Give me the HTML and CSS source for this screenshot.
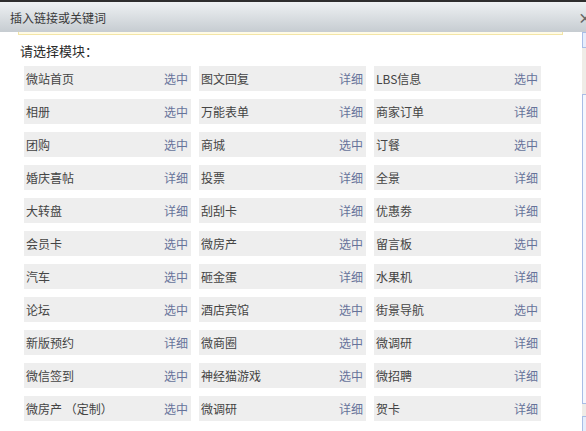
FILE: index.html
```html
<!DOCTYPE html>
<html lang="zh-CN">

<head>
    <meta charset="UTF-8">
    <meta name="viewport" content="width=device-width, initial-scale=1.0">
    <title>插入链接或关键词</title>
    <link rel="stylesheet" href="styles.css">
</head>

<body>
    <div class="dialog">
        <div class="dialog-head">
            <span class="dialog-title">插入链接或关键词</span>
            <span class="dialog-close">×</span>
        </div>
        <div class="dialog-body">
            <div class="content">
                <div class="tips"></div>
                <div class="label">请选择模块：</div>
                <div class="modules">
                    <div class="module"><span>微站首页</span><a>选中</a></div>
                    <div class="module"><span>图文回复</span><a>详细</a></div>
                    <div class="module"><span>LBS信息</span><a>选中</a></div>
                    <div class="module"><span>相册</span><a>选中</a></div>
                    <div class="module"><span>万能表单</span><a>详细</a></div>
                    <div class="module"><span>商家订单</span><a>详细</a></div>
                    <div class="module"><span>团购</span><a>选中</a></div>
                    <div class="module"><span>商城</span><a>选中</a></div>
                    <div class="module"><span>订餐</span><a>选中</a></div>
                    <div class="module"><span>婚庆喜帖</span><a>详细</a></div>
                    <div class="module"><span>投票</span><a>详细</a></div>
                    <div class="module"><span>全景</span><a>详细</a></div>
                    <div class="module"><span>大转盘</span><a>详细</a></div>
                    <div class="module"><span>刮刮卡</span><a>详细</a></div>
                    <div class="module"><span>优惠劵</span><a>详细</a></div>
                    <div class="module"><span>会员卡</span><a>选中</a></div>
                    <div class="module"><span>微房产</span><a>选中</a></div>
                    <div class="module"><span>留言板</span><a>选中</a></div>
                    <div class="module"><span>汽车</span><a>选中</a></div>
                    <div class="module"><span>砸金蛋</span><a>详细</a></div>
                    <div class="module"><span>水果机</span><a>详细</a></div>
                    <div class="module"><span>论坛</span><a>选中</a></div>
                    <div class="module"><span>酒店宾馆</span><a>选中</a></div>
                    <div class="module"><span>街景导航</span><a>选中</a></div>
                    <div class="module"><span>新版预约</span><a>详细</a></div>
                    <div class="module"><span>微商圈</span><a>选中</a></div>
                    <div class="module"><span>微调研</span><a>详细</a></div>
                    <div class="module"><span>微信签到</span><a>选中</a></div>
                    <div class="module"><span>神经猫游戏</span><a>选中</a></div>
                    <div class="module"><span>微招聘</span><a>详细</a></div>
                    <div class="module"><span>微房产 （定制）</span><a>选中</a></div>
                    <div class="module"><span>微调研</span><a>详细</a></div>
                    <div class="module"><span>贺卡</span><a>详细</a></div>
                </div>
            </div>
            <div class="scrollbar">
                <div class="scroll-btn"></div>
                <div class="scroll-thumb"></div>
                <div class="scroll-btn"></div>
            </div>
        </div>
    </div>
</body>

</html>
```

FILE: styles.css
```css
body {
    margin: 0;
    background: #fff;
    font-family: "Noto Sans CJK SC", "Liberation Sans", sans-serif;
    overflow: hidden;
}

.dialog {
    width: 600px;
    border-top: 2px solid #2e2e2e;
}

.dialog-head {
    height: 30px;
    display: flex;
    justify-content: space-between;
    align-items: center;
    padding: 0 8px 0 10px;
    background: linear-gradient(#eef1f3, #c6ccd1);
}

.dialog-title {
    font-size: 12px;
    color: #3a3a3a;
}

.dialog-close {
    font-size: 14px;
    font-weight: bold;
    color: #666;
}

.dialog-body {
    display: flex;
}

.content {
    width: 582px;
}

.tips {
    height: 2px;
    margin: 0 19px 0 18px;
    background: #fffbe6;
    border: 1px solid #f3e5a6;
    border-top: none;
}

.label {
    margin: 7px 0 0 20px;
    font-size: 13px;
    line-height: 18px;
    color: #2a2a2a;
}

.modules {
    display: grid;
    grid-template-columns: repeat(3, 167px);
    grid-auto-rows: 25px;
    gap: 8px;
    margin: 6px 0 0 24px;
}

.module {
    display: flex;
    justify-content: space-between;
    align-items: center;
    padding: 0 3px 0 2px;
    background: #eeeeee;
    font-size: 12px;
    color: #444;
}

.module a {
    color: #66739a;
    cursor: pointer;
}

.scrollbar {
    width: 17px;
    display: flex;
    flex-direction: column;
    background: #efece7;
}

.scroll-btn {
    height: 14px;
    border: 1px solid #a9bde6;
    background: #e6edfb;
}

.scroll-thumb {
    height: 308px;
    margin-top: 46px;
    margin-bottom: 12px;
    border: 1px solid #a9bde6;
    background: #f5f7fd;
}
```
